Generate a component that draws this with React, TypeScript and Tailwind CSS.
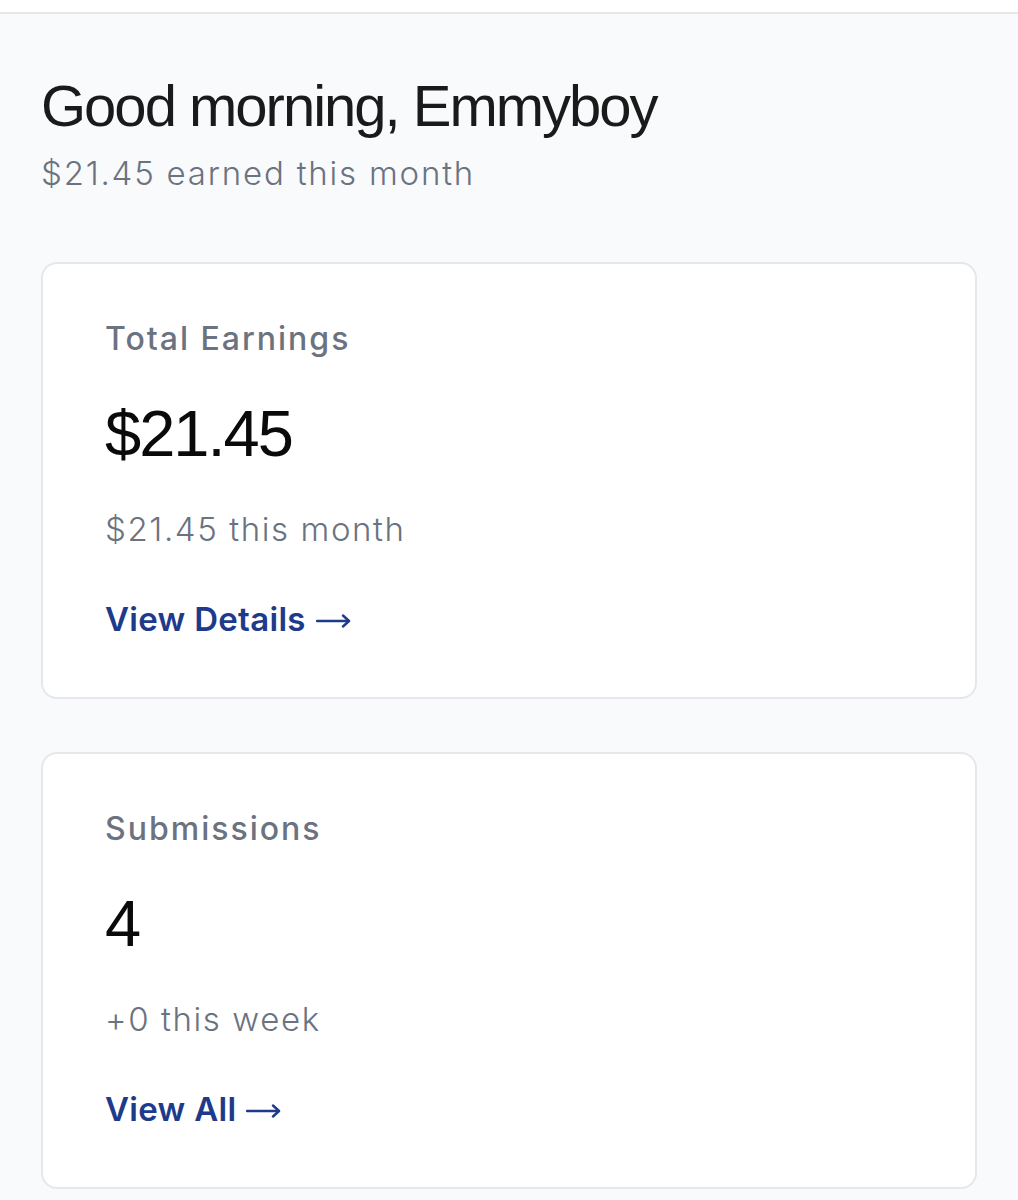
export default function App() {
  const cards = [
    { label: "Total Earnings", value: "$21.45", note: "$21.45 this month", link: "View Details" },
    { label: "Submissions", value: "4", note: "+0 this week", link: "View All" },
  ];

  return (
    <div className="min-h-screen bg-white font-['Inter',sans-serif]">
      <div className="h-3 bg-white" />
      <div className="border-t-2 border-[#e5e7eb] bg-[#f9fafb] px-[41px] pt-[59px] pb-4">
        <h1 className="font-['Liberation_Sans',Arial,sans-serif] text-[58px] leading-[66px] tracking-[-2px] text-[#1a1a1a]">
          Good morning, Emmyboy
        </h1>
        <p className="mt-[14px] text-[33px] leading-[40px] tracking-[1.8px] font-light text-[#6b7280]">
          $21.45 earned this month
        </p>

        <div className="mt-[69px] flex flex-col gap-[53px]">
          {cards.map((c) => (
            <div
              key={c.label}
              className="h-[437px] rounded-[16px] border-2 border-[#e5e7eb] bg-white px-[62px] pt-[55px]"
            >
              <div className="text-[32px] leading-[40px] font-medium tracking-[2px] text-[#6b7280]">
                {c.label}
              </div>
              <div className="mt-[37px] font-['Liberation_Sans',Arial,sans-serif] text-[65px] leading-[76px] tracking-[-2px] text-[#0a0a0a]">
                {c.value}
              </div>
              <div className="mt-[37px] text-[33px] leading-[40px] font-light tracking-[1.6px] text-[#6b7280]">
                {c.note}
              </div>
              <a className="mt-[50px] flex items-center gap-[10px] text-[33px] leading-[40px] font-semibold tracking-[0.3px] text-[#1e3a8a]">
                <span>{c.link}</span>
                <svg width="35" height="14" viewBox="0 0 35 14" fill="none" stroke="currentColor" strokeWidth="2.4" strokeLinecap="round" strokeLinejoin="round" className="mt-[3px]">
                  <path d="M1 7h32" />
                  <path d="M27 1.5l6 5.5-6 5.5" />
                </svg>
              </a>
            </div>
          ))}
        </div>
      </div>
    </div>
  );
}
